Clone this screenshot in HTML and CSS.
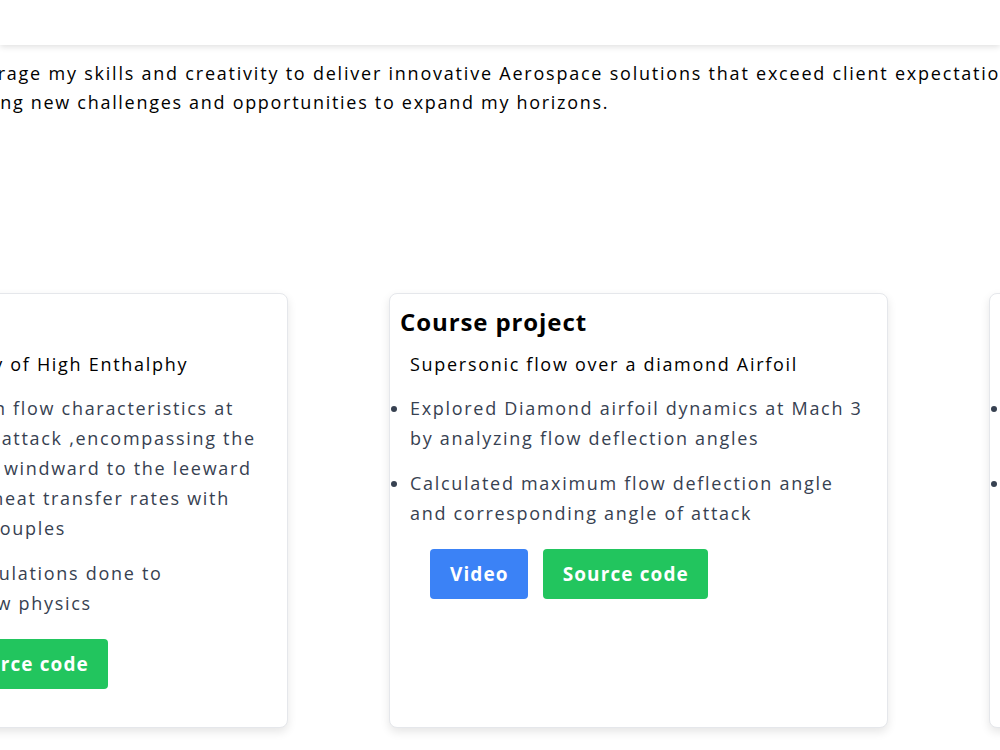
FILE: index.html
```html
<!doctype html>
<html>
<head>
    <meta charset="UTF-8">
    <meta name="viewport" content="width=device-width, initial-scale=1.0">
    <title>Portfolio</title>
    <link rel="stylesheet" href="styles.css">
</head>
<body>
    <header class="topbar"></header>

    <section class="about">
        <p class="objective">
            <span class="line first">To leverage my skills and creativity to deliver innovative Aerospace solutions that exceed client expectations, while</span>
            <span class="line">embracing new challenges and opportunities to expand my horizons.</span>
        </p>
    </section>

    <section class="projects">
        <div class="track">
            <div class="card">
                <h2>Course project</h2>
                <h3>Experimental Study of High Enthalphy</h3>
                <ul>
                    <li>Studied variation in flow characteristics at<br>different angles of attack ,encompassing the<br>full body, from the windward to the leeward<br>sides and studied heat transfer rates with<br>all coaxial thermocouples</li>
                    <li>Additional CFD simulations done to<br>understand the flow physics</li>
                </ul>
                <div class="links">
                    <a class="btn btn-video" href="#">Video</a>
                    <a class="btn btn-code" href="#">Source code</a>
                </div>
            </div>

            <div class="card">
                <h2>Course project</h2>
                <h3>Supersonic flow over a diamond Airfoil</h3>
                <ul>
                    <li>Explored Diamond airfoil dynamics at Mach 3 by analyzing flow deflection angles</li>
                    <li>Calculated maximum flow deflection angle and corresponding angle of attack</li>
                </ul>
                <div class="links">
                    <a class="btn btn-video" href="#">Video</a>
                    <a class="btn btn-code" href="#">Source code</a>
                </div>
            </div>

            <div class="card">
                <h2 class="accent">Capstone project</h2>
                <h3>Design of a sounding rocket</h3>
                <ul>
                    <li>Designed the airframe and fins of a sounding rocket and validated its stability</li>
                    <li>Ran trajectory simulations</li>
                </ul>
            </div>
        </div>
    </section>
</body>
</html>
```

FILE: styles.css
```css
html, body {
    margin: 0;
    overflow: hidden;
    background: #fff;
}
body {
    font-family: "Open Sans", "DejaVu Sans", sans-serif;
    color: #000;
    letter-spacing: 1.7px;
}
.topbar {
    height: 45px;
    background: #fff;
    box-shadow: 0 2px 6px rgba(0, 0, 0, 0.12);
}
.about {
    margin-left: -80px;
}
.objective {
    margin: 14px 0 0;
    font-size: 18px;
    line-height: 29px;
    white-space: nowrap;
}
.objective .line {
    display: block;
}
.objective .first {
    padding-left: 6px;
    letter-spacing: 1.78px;
}
.projects {
    margin-top: 176px;
    padding-bottom: 30px;
}
.track {
    display: flex;
    gap: 101px;
    margin-left: -211px;
}
.card {
    flex: 0 0 499px;
    box-sizing: border-box;
    height: 435px;
    padding: 10px;
    border: 1px solid #e5e7eb;
    border-radius: 8px;
    box-shadow: 0 4px 10px rgba(0, 0, 0, 0.1);
    background: #fff;
}
.card h2 {
    margin: 0;
    font-size: 24px;
    line-height: 36px;
    font-weight: 700;
    letter-spacing: 0.9px;
}
.card h2.accent {
    color: #d97706;
}
.card h3 {
    margin: 9px 0 0;
    padding-left: 10px;
    font-size: 18px;
    line-height: 30px;
    font-weight: 400;
}
.card ul {
    margin: 14px 0 0;
    padding: 0 10px;
    color: #374151;
    font-size: 18px;
    line-height: 30px;
}
.card li {
    margin-bottom: 15px;
}
.links {
    display: flex;
    gap: 15px;
    margin-top: 21px;
    padding-left: 30px;
}
.btn {
    display: inline-block;
    padding: 0 19px 0 20px;
    height: 50px;
    line-height: 50px;
    border-radius: 4px;
    color: #fff;
    font-size: 19px;
    font-weight: 700;
    letter-spacing: 1.1px;
    text-decoration: none;
}
.btn-video {
    background: #3b82f6;
}
.btn-code {
    background: #22c55e;
}
```
